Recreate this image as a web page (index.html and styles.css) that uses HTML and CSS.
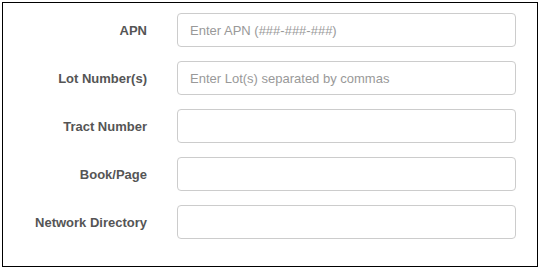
FILE: index.html
```html
<!DOCTYPE html>
<html>
<head>
<meta charset="utf-8">
<link rel="stylesheet" href="styles.css">
</head>
<body>
<div class="frame">
  <form class="form">
    <label class="label" for="apn">APN</label>
    <input class="input" id="apn" type="text" placeholder="Enter APN (###-###-###)">
    <label class="label" for="lot">Lot Number(s)</label>
    <input class="input" id="lot" type="text" placeholder="Enter Lot(s) separated by commas">
    <label class="label" for="tract">Tract Number</label>
    <input class="input" id="tract" type="text">
    <label class="label" for="book">Book/Page</label>
    <input class="input" id="book" type="text">
    <label class="label" for="net">Network Directory</label>
    <input class="input" id="net" type="text">
  </form>
</div>
</body>
</html>
```
FILE: styles.css
```css
html, body {
  margin: 0;
  padding: 0;
  background: #fff;
}
body {
  padding: 2px;
  font-family: "Liberation Sans", Arial, sans-serif;
}
.frame {
  width: 534px;
  height: 263px;
  border: 1px solid #000;
  box-sizing: content-box;
}
.form {
  display: grid;
  grid-template-columns: 144px 339px;
  column-gap: 30px;
  row-gap: 14px;
  padding: 10px 21px 0 0;
  margin: 0;
  align-items: center;
}
.label {
  text-align: right;
  font-weight: bold;
  font-size: 13px;
  color: #555;
}
.input {
  box-sizing: border-box;
  height: 34px;
  width: 339px;
  margin: 0;
  padding: 6px 12px;
  border: 1px solid #ccc;
  border-radius: 4px;
  font-family: "Liberation Sans", Arial, sans-serif;
  font-size: 13px;
  color: #555;
  background: #fff;
  outline: none;
}
.input::placeholder {
  color: #999;
}
```
